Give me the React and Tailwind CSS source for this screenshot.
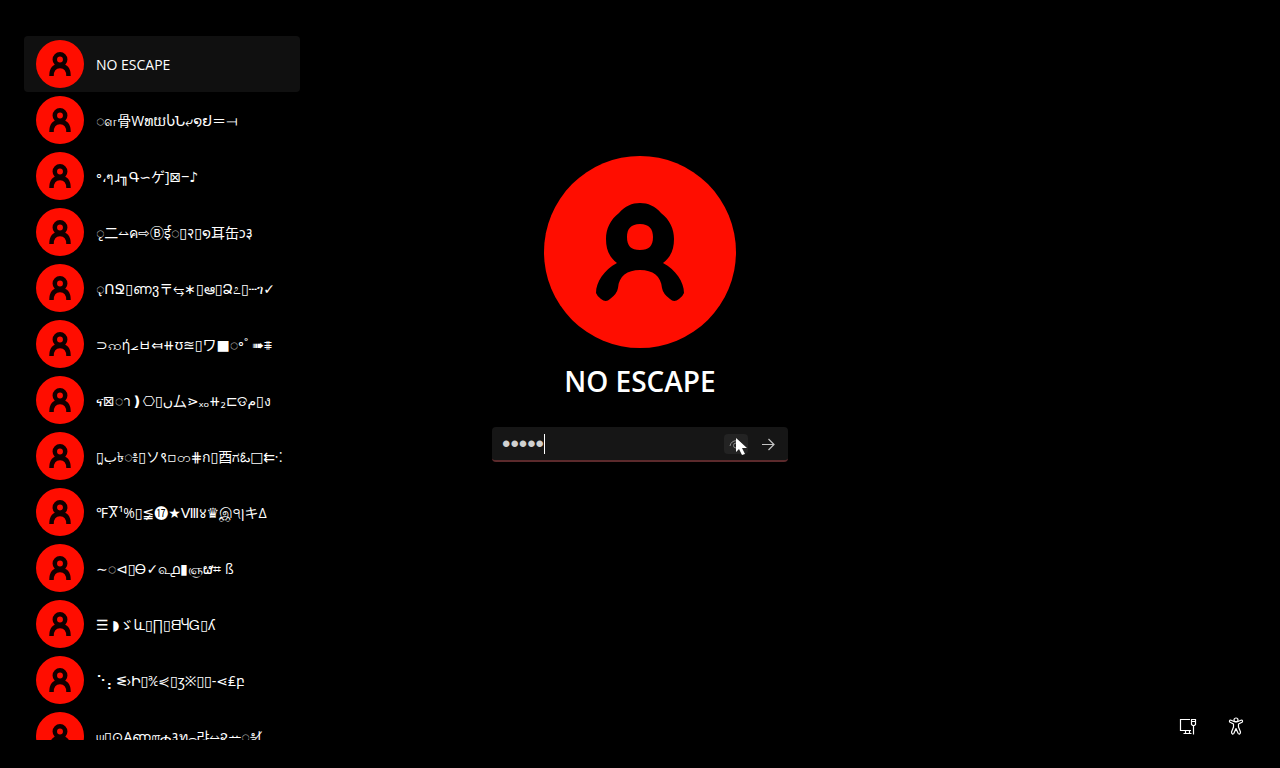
import { useState } from "react";

const accounts = [
  "NO ESCAPE",
  "◌ள骨WທយႱՆ⤶໑ຢ＝⟞",
  "॰،ๆɹ╖Գ∽ゲ]⊠‒♪",
  "ृ二⥎ค⇨Ⓑई◌▯२▯໑耳缶ɔ३",
  "◌̢ՈՋ▯ണვ〒⥃∗▯ఆ▯Ձ೭▯┄ገ✓",
  "⊃ꩡή⦟ㅂ⤆⧺ʊ≊▯ワ■◌॰˚ ➠⩨",
  "ና⊠◌า❫⎔▯ں厶⋗ₓₒ⧺₂⊏ଡم▯ง",
  "▯ب̭৳◌៖▯ソ९▫တ⋕ก▯酉ಗఓ□⇇⁖",
  "℉Ⴟ¹%▯≨⓱★Ⅷ४♛இ੧ןキ∆",
  "∼◌⊲▯Ꮎ✓௳൧▮ஞຜ⌗ ß",
  "☰ ◗ゞև▯∏▯ᗺႷᏀ▯ʎ",
  "⠑⡄ᓬ›Ի▯℀⋞▯ʒ※▯▯‐⋖₤բ",
  "⍦▯⊙Aണ௱ሐ३ท⌢랴⥎૨ᅭ◌៖∤",
];

function UserGlyph() {
  return (
    <svg viewBox="0 0 192 192" className="h-full w-full" aria-hidden="true">
      <path
        fillRule="evenodd"
        d="M96 47C104 47 111 50 117 57C126 64 130 73 130 83C130 93 127 101 119 107C132 114 140 126 140 137Q139 140 135 143Q130 147 126 143Q119 138 118 132C117 120 109 114 96 114C83 114 75 120 74 132Q73 138 66 143Q62 147 57 143Q53 140 52 137C52 126 60 114 73 107C65 101 62 93 62 83C62 73 66 64 75 57C81 50 88 47 96 47ZM96 68C87 68 83 73 83 81C83 90 87 94 96 94C105 94 109 90 109 81C109 73 105 68 96 68Z"
        fill="#000"
      />
    </svg>
  );
}

function SmallUserGlyph() {
  return (
    <svg viewBox="0 0 48 48" className="size-12" fill="none" stroke="#100000" strokeWidth="4.5" aria-hidden="true">
      <circle cx="24" cy="19.500" r="5.200" />
      <path d="M15.500 36C15.500 29 19 26 24 26C29 26 32.500 29 32.500 36" />
    </svg>
  );
}

function Account({ name, active, onClick }) {
  return (
    <li>
      <button
        type="button"
        onClick={onClick}
        className={`flex h-14 w-full items-center gap-3 rounded px-3 text-left text-sm whitespace-nowrap ${
          active ? "bg-[#101010]" : ""
        }`}
      >
        <span className="size-12 shrink-0 rounded-full bg-[#ff0d00]">
          <SmallUserGlyph />
        </span>
        <span className="h-5 pt-px leading-5">{name}</span>
      </button>
    </li>
  );
}

function PasswordBox() {
  return (
    <form
      onSubmit={(e) => e.preventDefault()}
      className="mt-7 flex h-[35px] w-[296px] items-center rounded border-b-2 border-[#5c2a2c] bg-[#161616] pr-2 pl-2.5"
    >
      <input
        type="password"
        aria-label="Password"
        defaultValue="alone"
        className="field-sizing-content h-6 bg-transparent font-['Liberation_Sans',sans-serif] text-2xl leading-6 text-[#d0d0d0] caret-transparent outline-none"
      />
      <span className="h-5 w-px bg-white" />
      <span className="flex-1" />
      <button
        type="button"
        aria-label="Show password"
        className="relative flex h-5 w-6 items-center justify-center rounded-sm bg-[#232323]"
      >
        <svg viewBox="0 0 16 16" className="size-4" fill="none" stroke="#8a8a8a" aria-hidden="true">
          <path d="M2 10C3 3 13 3 14 10" />
          <circle cx="8" cy="9.500" r="2.500" />
        </svg>
        <svg viewBox="0 0 12 18" className="absolute top-1 left-3 h-[18px] w-3" aria-hidden="true">
          <path d="M0 0V14L3 11L6 17L9 16L6 10H11Z" fill="#fff" />
        </svg>
      </button>
      <button type="submit" aria-label="Sign in" className="ml-2 flex size-6 items-center justify-center">
        <svg viewBox="0 0 16 16" className="size-4" fill="none" stroke="#c4c4c4" strokeWidth="1.200" aria-hidden="true">
          <path d="M2 8.500H14M8.500 3L14 8.500L8.500 14" />
        </svg>
      </button>
    </form>
  );
}

export default function App() {
  const [selected, setSelected] = useState(0);

  return (
    <div className="grid h-screen grid-cols-[300px_1fr_300px] overflow-hidden bg-black font-['Open_Sans','Noto_Sans','DejaVu_Sans','Noto_Sans_CJK_JP',sans-serif] text-white">
      <nav aria-label="Accounts" className="mt-9 mb-7 overflow-hidden pl-6">
        <ul>
          {accounts.map((name, i) => (
            <Account key={name} name={name} active={i === selected} onClick={() => setSelected(i)} />
          ))}
        </ul>
      </nav>

      <main className="flex flex-col items-center pt-[156px]">
        <div className="size-48 rounded-full bg-[#ff0d00]">
          <UserGlyph />
        </div>
        <h1 className="mt-[15px] text-[28px] leading-9 font-semibold">NO ESCAPE</h1>
        <PasswordBox />
      </main>

      <footer className="flex items-end justify-end gap-6 pr-8 pb-[30px]">
        <button type="button" aria-label="Network" className="size-6">
          <svg viewBox="0 0 24 24" className="size-6" fill="none" stroke="#fff" strokeWidth="1.200" aria-hidden="true">
            <path d="M14 5.500H4.500V16.500H15M9.500 17V19.500M13.500 17V19.500M7.500 19.500H15.500M15.500 5.500H19.500V10.500L18.500 11.500H16.500L15.500 10.500ZM15.500 7.500H19.500M17.500 11.500V20.500" />
          </svg>
        </button>
        <button type="button" aria-label="Accessibility" className="size-6">
          <svg viewBox="0 0 24 24" className="size-6" fill="none" stroke="#fff" strokeWidth="1.200" strokeLinejoin="round" aria-hidden="true">
            <circle cx="12" cy="6" r="2" />
            <path d="M10 7.500L6.500 6C5.500 6 5 7.500 6 8.200L9.500 10V13L7.500 18C7.500 20 9 20.500 9.800 19.500L12 14.500L14.200 19.500C15 20.500 16.500 20 16.500 18L14.500 13V10L18 8.200C19 7.500 18.500 6 17.500 6L14 7.500Z" />
          </svg>
        </button>
      </footer>
    </div>
  );
}
